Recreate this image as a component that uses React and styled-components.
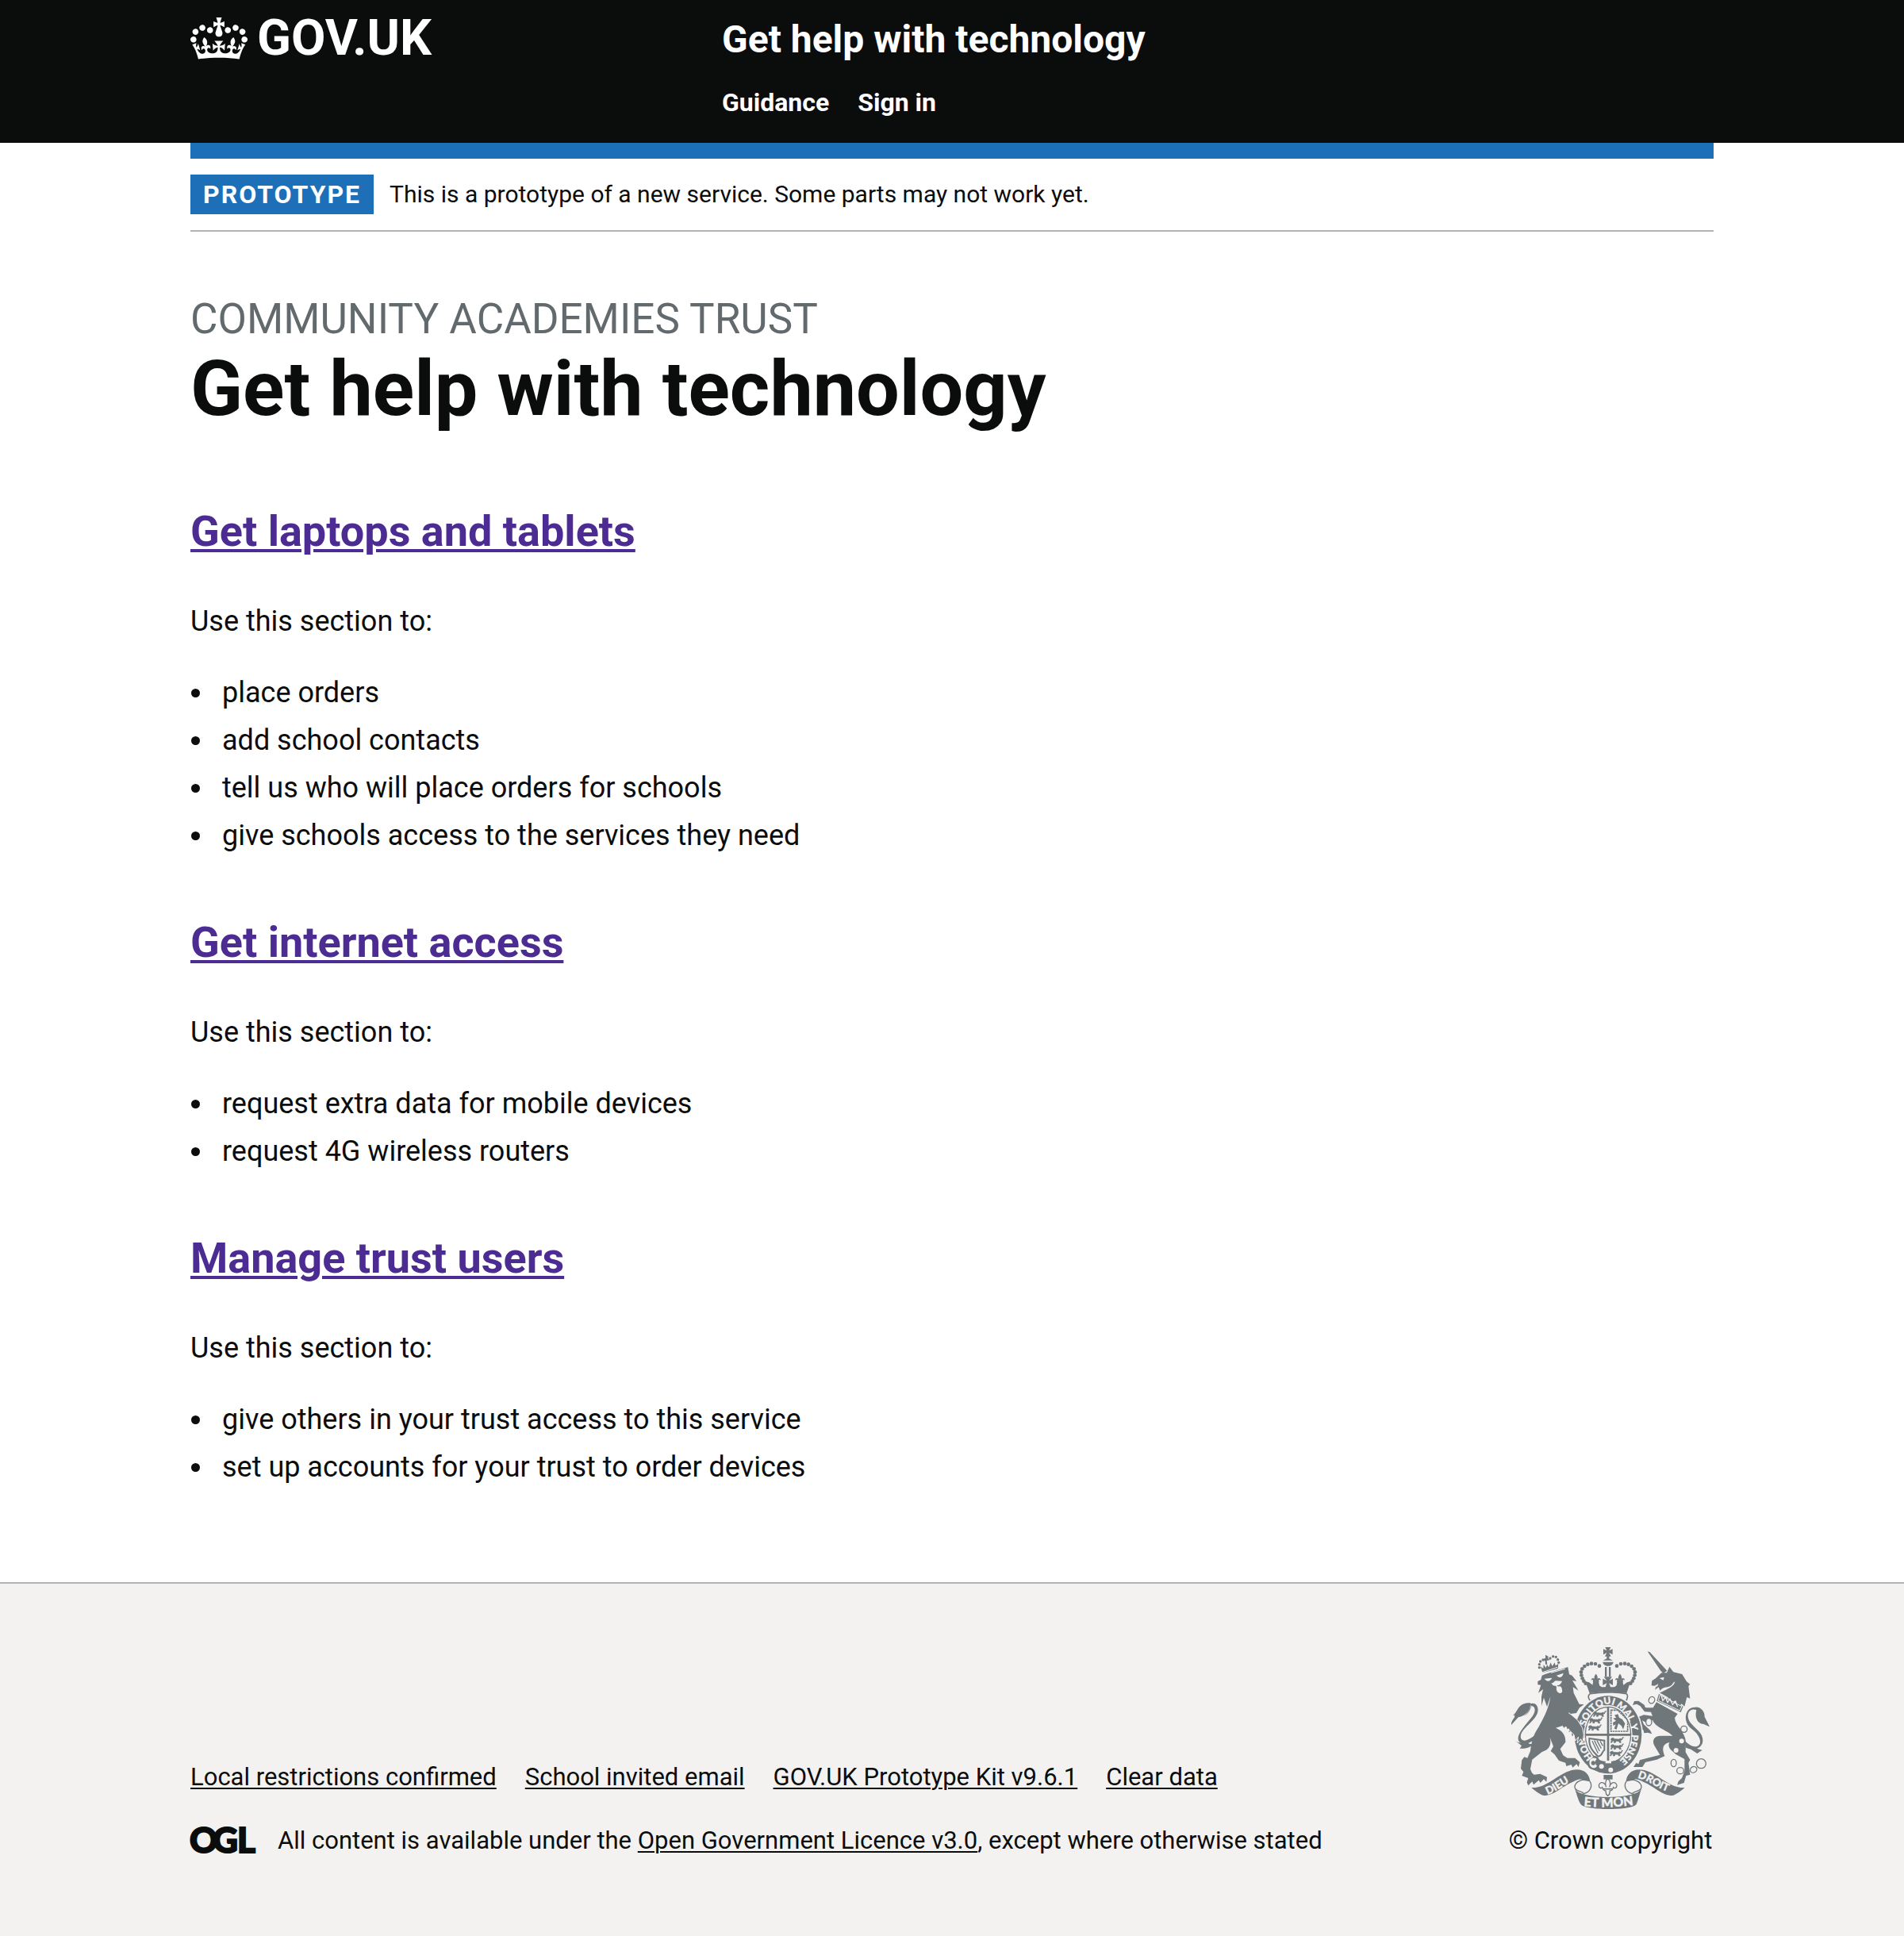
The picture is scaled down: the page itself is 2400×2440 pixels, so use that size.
import React from "react";
import styled, { createGlobalStyle } from "styled-components";

const GlobalStyle = createGlobalStyle`
  *, *::before, *::after { box-sizing: border-box; }
  body {
    margin: 0;
    background: #f3f2f1;
    color: #0b0c0c;
    font-family: Roboto, "Liberation Sans", sans-serif;
  }
`;

const Page = styled.div`
  display: flex;
  flex-direction: column;
  min-height: 100vh;
`;

const Container = styled.div`
  width: calc(100% - 120px);
  max-width: 1920px;
  margin: 0 auto;
`;

const Header = styled.header`
  padding: 20px 0 30px;
  background: #0b0c0c;
`;

const HeaderGrid = styled(Container)`
  display: grid;
  grid-template-columns: calc(100% / 3) 1fr;
  column-gap: 30px;
`;

const HeaderLink = styled.a`
  color: #ffffff;
  font-weight: 700;
  text-decoration: none;
`;

const LogoLink = styled(HeaderLink)`
  display: flex;
  align-items: center;
  align-self: start;
  gap: 12px;
  font-size: 63px;
  line-height: 56px;
`;

const Service = styled.div`
  display: flex;
  flex-direction: column;
  align-items: flex-start;
  gap: 28px;
`;

const ServiceLink = styled(HeaderLink)`
  font-size: 48px;
  line-height: 60px;
`;

const Nav = styled.nav`
  display: flex;
  flex-wrap: wrap;
  gap: 36px;
  font-size: 32px;
  line-height: 42px;
`;

const Content = styled.div`
  flex: 1;
  background: #ffffff;
`;

const BlueBar = styled.div`
  height: 20px;
  background: #1d70b8;
`;

const PhaseBanner = styled.div`
  display: flex;
  align-items: center;
  gap: 20px;
  padding: 20px 0;
  border-bottom: 2px solid #b1b4b6;
`;

const Tag = styled.strong`
  padding: 0 16px;
  background: #1d70b8;
  color: #ffffff;
  font-size: 32px;
  line-height: 50px;
  letter-spacing: 2px;
  text-transform: uppercase;
`;

const PhaseText = styled.span`
  font-size: 30px;
  line-height: 50px;
`;

const Main = styled.main`
  padding: 80px 0 30px;
`;

const Caption = styled.span`
  display: block;
  margin-bottom: 8px;
  color: #626a6e;
  font-size: 53px;
  line-height: 60px;
`;

const Title = styled.h1`
  margin: 0 0 100px;
  font-size: 97px;
  line-height: 100px;
  font-weight: 700;
`;

const Section = styled.section`
  margin-bottom: 80px;
  font-size: 36px;
  line-height: 50px;
`;

const SectionTitle = styled.h2`
  margin: 0 0 58px;
  font-size: 54px;
  line-height: 60px;
  font-weight: 700;
`;

const SectionLink = styled.a`
  color: #4c2c92;
  text-decoration: underline;
  text-decoration-thickness: 4px;
  text-underline-offset: 4px;
`;

const Intro = styled.p`
  margin: 0 0 40px;
`;

const List = styled.ul`
  margin: 0;
  padding-left: 30px;
`;

const Item = styled.li`
  margin-bottom: 10px;
  padding-left: 10px;
`;

const Footer = styled.footer`
  padding: 80px 0 100px;
  border-top: 2px solid #b1b4b6;
  background: #f3f2f1;
  font-size: 31px;
  line-height: 40px;
`;

const FooterRow = styled(Container)`
  display: flex;
  align-items: flex-end;
  justify-content: space-between;
  gap: 60px;
`;

const FooterMeta = styled.div`
  display: flex;
  flex-direction: column;
  gap: 40px;
`;

const FooterLinks = styled.div`
  display: flex;
  flex-wrap: wrap;
  gap: 36px;
`;

const FooterLink = styled.a`
  color: #0b0c0c;
  text-decoration: underline;
  text-decoration-thickness: 2px;
  text-underline-offset: 3px;
`;

const Licence = styled.div`
  display: flex;
  align-items: center;
  gap: 26px;
`;

const CopyrightLink = styled.a`
  display: flex;
  flex-direction: column;
  align-items: center;
  gap: 20px;
  min-width: 260px;
  color: #0b0c0c;
  text-decoration: none;
  white-space: nowrap;
`;

const CrownIcon = () => (
  <svg width="72" height="53" viewBox="0 0 132 97" aria-hidden="true">
    <path
      fill="currentColor"
      fillRule="evenodd"
      d="M25 30.2c3.5 1.5 7.7-.2 9.1-3.7 1.5-3.6-.2-7.8-3.9-9.2-3.6-1.4-7.6.3-9.1 3.9-1.4 3.5.3 7.5 3.9 9zM9 39.5c3.6 1.5 7.8-.2 9.2-3.7 1.5-3.6-.2-7.8-3.9-9.1-3.6-1.5-7.6.2-9.1 3.8-1.4 3.5.3 7.5 3.8 9zM4.4 57.2c3.5 1.5 7.7-.2 9.1-3.8 1.5-3.6-.2-7.7-3.9-9.1-3.5-1.5-7.6.3-9.1 3.8-1.4 3.5.3 7.6 3.9 9.1zm38.3-21.4c3.5 1.5 7.7-.2 9.1-3.8 1.5-3.6-.2-7.7-3.9-9.1-3.6-1.5-7.6.3-9.1 3.8-1.3 3.6.4 7.7 3.9 9.1zm64.4-5.6c-3.6 1.5-7.8-.2-9.1-3.7-1.5-3.6.2-7.8 3.8-9.2 3.6-1.4 7.7.3 9.2 3.9 1.3 3.5-.4 7.5-3.9 9zm15.9 9.3c-3.6 1.5-7.7-.2-9.1-3.7-1.5-3.6.2-7.8 3.7-9.1 3.6-1.5 7.7.2 9.2 3.8 1.5 3.5-.3 7.5-3.8 9zm4.7 17.7c-3.6 1.5-7.8-.2-9.2-3.8-1.5-3.6.2-7.7 3.9-9.1 3.6-1.5 7.7.3 9.2 3.8 1.3 3.5-.4 7.6-3.9 9.1zM89.3 35.8c-3.6 1.5-7.8-.2-9.2-3.8-1.4-3.6.2-7.7 3.9-9.1 3.6-1.5 7.7.3 9.2 3.8 1.4 3.6-.3 7.7-3.9 9.1zM69.7 17.7l8.9 4.7V9.3l-8.9 2.8c-.2-.3-.5-.6-.9-.9L72.4 0H59.6l3.5 11.2c-.3.3-.6.5-.9.9l-8.8-2.8v13.1l8.8-4.7c.3.3.6.7.9.9l-5 15.4v.1c-.2.8-.4 1.6-.4 2.4 0 4.1 3.1 7.5 7 8.1h.2c.3 0 .7.1 1 .1.4 0 .7 0 1-.1h.2c4-.6 7.1-4.1 7.1-8.1 0-.8-.1-1.7-.4-2.4V34l-5.1-15.4c.4-.2.7-.6 1-.9zM66 92.8c16.9 0 32.8 1.1 47.1 3.2 4-16.9 8.9-26.7 14-33.5l-9.6-3.4c1 4.9 1.1 7.2 0 10.2-1.5-1.4-3-4.3-4.2-8.7L108.6 76c2.8-2 5-3.2 7.5-3.3-4.4 9.4-10 11.9-13.6 11.2-4.3-.8-6.3-4.6-5.6-7.9 1-4.7 5.7-5.9 8-.5 4.3-8.7-3-11.4-7.6-8.8 7.1-7.2 7.9-13.5 2.1-21.1-8 6.1-8.1 12.3-4.5 20.8-4.7-5.4-12.1-2.5-9.5 6.2 3.4-5.2 7.9-2 7.2 3.1-.6 4.3-6.4 7.8-13.5 7.2-10.3-.9-10.9-8-11.2-13.8 2.5-.5 7.1 1.8 11 7.3L80.2 60c-4.1 4.4-8 5.3-12.3 5.4 1.4-4.4 8-11.6 8-11.6H55.5s6.4 7.2 7.9 11.6c-4.2-.1-8-1-12.3-5.4l1.4 16.4c3.9-5.5 8.5-7.7 10.9-7.3-.3 5.8-.9 12.8-11.1 13.8-7.2.6-12.9-2.9-13.5-7.2-.7-5 3.8-8.3 7.1-3.1 2.7-8.7-4.6-11.6-9.4-6.2 3.7-8.5 3.6-14.7-4.6-20.8-5.8 7.6-5 13.9 2.2 21.1-4.7-2.6-11.9.1-7.7 8.8 2.3-5.5 7.1-4.2 8.1.5.7 3.3-1.3 7.1-5.7 7.9-3.5.7-9-1.8-13.5-11.2 2.5.1 4.7 1.3 7.5 3.3l-4.7-15.4c-1.2 4.4-2.7 7.2-4.3 8.7-1.1-3-.9-5.3 0-10.2l-9.5 3.4c5 6.9 9.9 16.7 14 33.5 14.8-2.1 30.8-3.2 47.7-3.2z"
    />
  </svg>
);

const LogoText = styled.text`
  font-family: Lato, "Liberation Sans", sans-serif;
  font-weight: 900;
  font-size: ${(p) => p.$size}px;
  fill: ${(p) => p.$fill};
  stroke: ${(p) => p.$fill};
  stroke-width: ${(p) => p.$weight}px;
`;

const OglSvg = styled.svg`
  overflow: visible;
`;

const OglLogo = () => (
  <OglSvg width="84" height="34" viewBox="0 0 84 34" role="img" aria-label="OGL">
    <LogoText $size={44} $weight={2} $fill="#0b0c0c" x="-1 28 59" y="32">OGL</LogoText>
  </OglSvg>
);

const INK = "#6f777b";
const PAPER = "#f3f2f1";

const CROWN_BEADS = [
  [405, 148], [390, 140], [375, 139], [361, 142], [349, 149], [340, 159],
  [336, 171], [337, 183], [341, 195], [346, 205], [353, 214],
];
const LION_BEADS = [
  [178, 154], [178, 142], [182, 131], [192, 125], [219, 119], [230, 112],
  [241, 114], [248, 124], [251, 135], [200, 124],
];

const GARTER_WORDS = [
  ["HON", "10%"],
  ["SOIT", "30%"],
  ["QUI", "43%"],
  ["MAL", "55%"],
  ["Y", "69%"],
  ["PENSE", "75%"],
];

const Fleur = ({ x, y }) => (
  <g transform={`translate(${x} ${y})`}>
    <path d="M0 -17C8 -8 8 0 3 10H-3C-8 0 -8 -8 0 -17Z" />
    <path d="M-3 9C-3 -3 -18 -5 -18 7C-12 2 -9 7 -12 14H12C9 7 12 2 18 7C18 -5 3 -3 3 9Z" />
    <path d="M-10 12H10L14 30H-14Z" />
  </g>
);

const Passant = ({ x, y }) => (
  <g transform={`translate(${x} ${y})`}>
    <path
      d="M2 2L9 0L14 4L30 5L38 2L41 7L37 11L39 18H33L31 13L20 12L18 18H12L13 12L7 11L5 17L0 18L3 10L0 7Z"
      fill={INK}
      stroke={INK}
      strokeWidth="2"
    />
    <path d="M38 6C48 8 40 -4 49 -1" fill="none" stroke={INK} strokeWidth="4" />
  </g>
);

const Curl = () => (
  <path
    d="M368 583C345 572 311 584 312 607C315 624 340 619 346 631C372 624 381 600 368 583Z"
    fill={PAPER}
    stroke={INK}
    strokeWidth="4"
  />
);

const ScrollEnd = () => (
  <path
    d="M148 608C205 612 240 560 300 542C345 532 368 555 370 585L347 581C335 572 320 577 305 586C260 605 235 638 195 638C175 632 160 618 148 608Z"
    fill={INK}
  />
);

const RoyalArms = () => (
  <svg width="250" height="204" viewBox="72 77 750 612" aria-hidden="true">
    <defs>
      <path id="garter" d="M438 523A97 116 0 0 1 438 292A97 116 0 0 1 438 523" />
      <path id="dieu" d="M209 634C250 620 280 588 325 572" />
      <path id="droit" d="M549 571C600 582 625 618 690 630" />
      <path id="etmon" d="M346 678Q438 687 532 674" />
    </defs>

    {/* lion */}
    <g fill={INK}>
      {LION_BEADS.map(([x, y]) => <circle key={x + "-" + y} cx={x} cy={y} r="5" />)}
      <path d="M201 106L212 112L211 120L218 125L206 128L208 142L201 142L200 128L193 123L201 119Z" />
      <path d="M183 150L193 158L194 143L203 155L207 143L214 153L221 135L227 149L236 135L239 147L250 140L248 158L190 174Z" />
      <path d="M172 206L184 200L188 184L200 179L286 152L291 180L302 184L319 206L303 203L312 218L326 241L305 228L308 250L329 292L347 294L330 306L318 326L292 330L330 358L346 385L350 408L342 438L335 424L320 440L326 414L314 431L309 408L302 414L300 400L304 391L289 399L296 381L284 387L280 374L271 382L266 374L240 382C265 393 278 408 277 436L257 462L268 486L284 496L313 496L331 512L326 530L319 519L304 532L299 521L280 527L277 514L252 506L236 483L221 470L231 452L218 418C225 450 214 464 188 473L151 502L144 538L150 552L158 559L181 556L207 568L205 586L195 576L182 590L176 580L156 597L151 585L136 600L131 588L136 572L112 563L118 549L108 536L112 504L121 492L133 496L144 470C148 438 154 410 176 378C190 351 213 315 220 264L207 302L195 268L186 300L186 264L192 236L174 250L184 220L172 219Z" />
      <path d="M119 338C137 332 155 298 143 291C166 282 181 306 168 333C151 365 102 391 108 420C113 442 150 424 172 398L180 404C158 433 126 452 105 438C82 418 119 378 148 343C166 321 166 298 144 299C143 319 122 336 102 338L72 371C71 350 92 342 82 334L96 328C94 302 117 284 144 288C150 300 141 321 119 338Z" />
      <path d="M72 371C73 352 91 342 94 332L78 334C97 326 91 291 138 291C145 319 121 340 97 342C87 347 79 356 72 371Z" />
      <path d="M88 431C101 442 112 438 128 434C137 443 146 445 158 442C143 456 128 461 104 460L111 450Z" />
    </g>
    <g fill={PAPER}>
      <path d="M197 196L226 193C220 205 211 208 204 203Z" />
      <path d="M243 184L269 175C267 190 254 195 248 188Z" />
      <path d="M222 211C230 217 235 205 239 204L264 205C259 219 250 222 244 221L250 226C264 218 266 244 264 247C255 255 246 249 243 239L242 224L230 222Z" />
    </g>
    <path d="M222 174L275 159M184 174L246 153" stroke={PAPER} strokeWidth="3" fill="none" />

    {/* unicorn */}
    <g fill={INK}>
      <path d="M587 93L596 96L661 166L647 176L637 166Z" />
      <path d="M640 174L660 174L670 151L685 171L718 179L735 207L748 217L742 224L748 271L736 266L727 301L716 291L704 303L694 279L680 283L663 266L641 253L633 250C665 234 689 225 691 207L684 212C673 236 646 221 635 242L629 228L615 238L620 224L602 222L604 204L618 195Z" />
      <path d="M630 254L722 301L713 323L622 280Z" />
      <path d="M621 285L701 329L690 344C692 374 729 397 732 434L731 474L748 503L742 514L748 559L733 563L725 590L699 598L704 584L717 572L727 546L727 500L694 482L680 469C665 459 665 440 672 437C649 440 638 455 652 489L622 502L579 512L568 530H534L544 515L553 518L558 504L581 498L634 484L616 454C600 429 613 411 639 412L682 412C665 392 618 382 606 352L588 366L567 354L573 369L597 391L604 405L588 400L574 402L572 391L555 380L544 344L573 333L606 337L600 322L576 321L559 299L546 292L531 296L537 281L553 280L573 294L584 306L608 306Z" />
      <path d="M731 434C748 449 759 456 776 451C797 442 785 407 753 385C719 360 727 302 768 304C788 302 804 321 803 340L822 378L800 368C774 367 765 340 772 314C741 305 730 337 751 364C775 391 796 402 796 429C797 448 781 460 773 460L794 466L775 479L751 463L732 457Z" />
    </g>
    <g fill={PAPER}>
      <path d="M632 194L650 190L647 202Z" />
      <path d="M613 224L628 216L624 226Z" />
      <circle cx="716" cy="432" r="9" />
      <circle cx="695" cy="467" r="9" />
      <circle cx="583" cy="300" r="6" />
    </g>
    <path d="M634 258L717 301L709 317L628 279Z" fill="none" stroke={PAPER} strokeWidth="3" />
    <path d="M640 263L645 279L655 266L663 286L672 273L682 294L692 283L701 302" fill="none" stroke={PAPER} strokeWidth="4" />
    <g fill={PAPER} stroke={INK} strokeWidth="4">
      <ellipse cx="603" cy="277" rx="11" ry="13" transform="rotate(25 603 277)" />
      <ellipse cx="592" cy="360" rx="11" ry="14" />
      <circle cx="725" cy="387" r="12" />
      <ellipse cx="686" cy="515" rx="10" ry="14" />
      <ellipse cx="711" cy="544" rx="13" ry="12" />
      <ellipse cx="761" cy="540" rx="13" ry="11" transform="rotate(-30 761 540)" />
      <circle cx="790" cy="517" r="18" />
    </g>

    {/* crown */}
    <g fill={INK}>
      {CROWN_BEADS.map(([x, y]) => (
        <React.Fragment key={x}>
          <circle cx={x} cy={y} r="7" />
          <circle cx={876 - x} cy={y} r="7" />
        </React.Fragment>
      ))}
      <path d="M427 77H448L442 90L455 84V105L442 98L449 112H426L433 98L420 105V84L433 90Z" />
      <path d="M433 111H442V120L456 127H419L433 120Z" />
      <path d="M418 133H458C456 153 420 153 418 133Z" />
      <path d="M426 152H433V188H426ZM441 152H448V188H441Z" />
      <path d="M422 189H453L442 204L456 196V221L442 213L448 231H427L433 213L418 221V196L433 204Z" />
      <path d="M352 207L366 210L382 222L400 219L414 228H461L476 219L494 222L510 210L523 207L508 251Q438 241 368 251Z" />
      <Fleur x={392} y={195} />
      <Fleur x={483} y={195} />
    </g>
    <path d="M370 253Q438 242 507 253C515 258 511 270 507 279H370C363 270 360 260 370 253Z" fill={PAPER} stroke={INK} strokeWidth="5" />

    {/* garter and shield */}
    <ellipse cx="438" cy="408" rx="132" ry="152" fill={PAPER} />
    <ellipse cx="438" cy="408" rx="127" ry="147" fill={INK} />
    <ellipse cx="438" cy="408" rx="92" ry="112" fill={PAPER} />
    <ellipse cx="438" cy="408" rx="86" ry="105" fill="none" stroke={INK} strokeWidth="4" />
    <path d="M434 304H442V404H524V412H442V512H434V412H352V404H434Z" fill={INK} />
    <Passant x={382} y={321} />
    <Passant x={368} y={346} />
    <Passant x={364} y={373} />
    <Passant x={448} y={420} />
    <Passant x={448} y={445} />
    <Passant x={445} y={470} />
    <path d="M449 315H474L512 352V395H449Z" fill="none" stroke={INK} strokeWidth="5" strokeDasharray="8 2" />
    <path d="M462 334L475 330L480 343L492 350L502 366L495 388L489 375L477 365L470 388L461 385L467 369L458 374L456 362L468 355L457 346L469 343Z" fill={INK} />
    <path d="M367 422L424 430V466C417 467 416 490 400 490C378 470 365 452 367 422Z" fill="none" stroke={INK} strokeWidth="6" />
    <path d="M378 432L400 478M386 430L406 470M396 430L412 460M408 432L418 450" stroke={INK} strokeWidth="4" />
    <path d="M370 490Q438 528 506 490L500 530L438 550L375 530Z" fill={INK} />
    <path d="M428 506H450V516H428Z" fill={PAPER} />
    <circle cx="413" cy="528" r="9" fill={PAPER} />
    <circle cx="448" cy="541" r="9" fill={PAPER} />
    <path d="M364 511C363 493 392 484 400 501C390 507 391 519 400 525C392 546 361 538 364 511Z" fill={PAPER} stroke={INK} strokeWidth="7" />
    <circle cx="382" cy="515" r="8" fill={INK} />
    {GARTER_WORDS.map(([word, offset]) => (
      <LogoText key={word} $size={36} $weight={1} $fill={PAPER}>
        <textPath href="#garter" startOffset={offset}>{word}</textPath>
      </LogoText>
    ))}
    {/* lion's forepaw over the garter */}
    <path
      d="M290 325L322 352L341 382L346 408L342 438L335 424L321 440L326 416L314 431L309 408L290 390Z"
      fill={INK}
      stroke={PAPER}
      strokeWidth="3"
    />
    <path d="M266 306L289 326L300 350L304 396L270 370Z" fill={INK} />

    {/* pendant and scroll */}
    <path d="M421 560H455V577H421Z" fill={INK} />
    <path
      d="M437 572C448 584 449 593 443 606C449 585 469 584 471 600C471 610 462 612 458 607C455 618 449 620 445 620L443 633L437 639L431 633L429 620C425 620 419 618 416 607C412 612 403 610 403 600C405 584 425 585 431 606C425 593 426 584 437 572Z"
      fill={PAPER}
      stroke={INK}
      strokeWidth="4"
    />
    <path d="M419 613H455" stroke={INK} strokeWidth="5" />
    <g>
      <Curl />
      <ScrollEnd />
    </g>
    <g transform="translate(876 0) scale(-1 1)">
      <Curl />
      <ScrollEnd />
    </g>
    <path d="M312 612C320 626 335 630 350 634C410 647 470 647 526 634C542 630 556 626 564 612C557 635 550 660 545 671C530 695 350 695 335 671C326 660 320 635 312 612Z" fill={INK} />
    <LogoText $size={40} $weight={1} $fill={PAPER}><textPath href="#dieu">DIEU</textPath></LogoText>
    <LogoText $size={40} $weight={1} $fill={PAPER}><textPath href="#droit">DROIT</textPath></LogoText>
    <LogoText $size={48} $weight={1} $fill={PAPER}><textPath href="#etmon">ET MON</textPath></LogoText>
  </svg>
);

const SECTIONS = [
  {
    title: "Get laptops and tablets",
    items: [
      "place orders",
      "add school contacts",
      "tell us who will place orders for schools",
      "give schools access to the services they need",
    ],
  },
  {
    title: "Get internet access",
    items: ["request extra data for mobile devices", "request 4G wireless routers"],
  },
  {
    title: "Manage trust users",
    items: [
      "give others in your trust access to this service",
      "set up accounts for your trust to order devices",
    ],
  },
];

const FOOTER_LINKS = [
  "Local restrictions confirmed",
  "School invited email",
  "GOV.UK Prototype Kit v9.6.1",
  "Clear data",
];

export default function App() {
  return (
    <Page>
      <GlobalStyle />
      <Header>
        <HeaderGrid>
          <LogoLink href="#">
            <CrownIcon />
            GOV.UK
          </LogoLink>
          <Service>
            <ServiceLink href="#">Get help with technology</ServiceLink>
            <Nav>
              <HeaderLink href="#">Guidance</HeaderLink>
              <HeaderLink href="#">Sign in</HeaderLink>
            </Nav>
          </Service>
        </HeaderGrid>
      </Header>
      <Content>
        <Container>
          <BlueBar />
          <PhaseBanner>
            <Tag>Prototype</Tag>
            <PhaseText>This is a prototype of a new service. Some parts may not work yet.</PhaseText>
          </PhaseBanner>
          <Main>
            <Caption>COMMUNITY ACADEMIES TRUST</Caption>
            <Title>Get help with technology</Title>
            {SECTIONS.map((section) => (
              <Section key={section.title}>
                <SectionTitle>
                  <SectionLink href="#">{section.title}</SectionLink>
                </SectionTitle>
                <Intro>Use this section to:</Intro>
                <List>
                  {section.items.map((item) => (
                    <Item key={item}>{item}</Item>
                  ))}
                </List>
              </Section>
            ))}
          </Main>
        </Container>
      </Content>
      <Footer>
        <FooterRow>
          <FooterMeta>
            <FooterLinks>
              {FOOTER_LINKS.map((label) => (
                <FooterLink key={label} href="#">{label}</FooterLink>
              ))}
            </FooterLinks>
            <Licence>
              <OglLogo />
              <span>
                All content is available under the{" "}
                <FooterLink href="#">Open Government Licence v3.0</FooterLink>, except where
                otherwise stated
              </span>
            </Licence>
          </FooterMeta>
          <CopyrightLink href="#">
            <RoyalArms />
            © Crown copyright
          </CopyrightLink>
        </FooterRow>
      </Footer>
    </Page>
  );
}
